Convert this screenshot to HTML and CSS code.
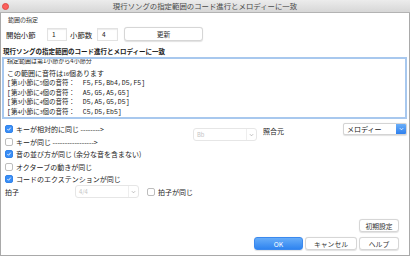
FILE: index.html
```html
<!DOCTYPE html>
<html lang="ja">
<head>
  <meta charset="UTF-8" />
  <title>現行ソングの指定範囲のコード進行とメロディーに一致</title>
  <link rel="stylesheet" href="styles.css">
</head>
<body>
  <div class="window">
    <!-- タイトルバー -->
    <div class="titlebar">
      <span class="close-dot"></span>
      <span class="title">現行ソングの指定範囲のコード進行とメロディーに一致</span>
      <span></span>
    </div>

    <!-- 範囲の指定 -->
    <div class="range-label">範囲の指定</div>
    <div class="range-row">
      <span class="lbl lbl-start">開始小節</span>
      <span class="field field-start">1</span>
      <span class="lbl lbl-count">小節数</span>
      <span class="field field-count">4</span>
      <button class="btn btn-update">更新</button>
    </div>

    <div class="heading">現行ソングの指定範囲のコード進行とメロディーに一致</div>

    <!-- 結果テキスト -->
    <div class="memo">
      <div class="memo-line first">指定範囲は第1小節から4小節分</div>
      <div class="memo-line count">この範囲に音符は<span class="num">16</span>個あります</div>
      <div class="memo-line note">[第<span class="num">1</span>小節に<span class="num">5</span>個の音符：  F5,F5,Bb4,D5,F5]</div>
      <div class="memo-line note">[第<span class="num">2</span>小節に<span class="num">4</span>個の音符：  A5,G5,A5,G5]</div>
      <div class="memo-line note">[第<span class="num">3</span>小節に<span class="num">4</span>個の音符：  D5,A5,G5,D5]</div>
      <div class="memo-line note">[第<span class="num">4</span>小節に<span class="num">3</span>個の音符：  C5,D5,Eb5]</div>
    </div>

    <!-- オプション -->
    <div class="options">
      <div class="opts-left">
        <div class="opt"><span class="check on"><svg viewBox="0 0 8 8"><path d="M1.8 4.1 3.4 5.7 6.3 2.2"/></svg></span>キーが相対的に同じ --------&gt;</div>
        <div class="opt"><span class="check"></span>キーが同じ -----------------&gt;</div>
        <div class="opt"><span class="check on"><svg viewBox="0 0 8 8"><path d="M1.8 4.1 3.4 5.7 6.3 2.2"/></svg></span>音の並び方が同じ (余分な音を含まない)</div>
        <div class="opt"><span class="check"></span>オクターブの動きが同じ</div>
        <div class="opt"><span class="check on"><svg viewBox="0 0 8 8"><path d="M1.8 4.1 3.4 5.7 6.3 2.2"/></svg></span>コードのエクステンションが同じ</div>
        <div class="opt beat-row">
          <span class="beat-lbl">拍子</span>
          <span class="combo combo-beat"><span class="combo-val">4/4</span><span class="combo-arrow"><svg viewBox="0 0 6 4"><path d="M1 1 3 3 5 1"/></svg></span></span>
          <span class="check"></span>拍子が同じ
        </div>
      </div>
      <span class="combo combo-key"><span class="combo-val">Bb</span><span class="combo-arrow"><svg viewBox="0 0 6 4"><path d="M1 1 3 3 5 1"/></svg></span></span>
      <span class="source-lbl">照合元</span>
      <span class="select">
        <span class="select-val">メロディー</span>
        <span class="select-arrow"><svg viewBox="0 0 6 4"><path d="M1 1 3 3 5 1"/></svg></span>
      </span>
    </div>

    <!-- ボタン -->
    <div class="footer">
      <button class="btn btn-wide">初期設定</button>
      <div class="btn-row">
        <button class="btn btn-ok">OK</button>
        <button class="btn btn-cancel">キャンセル</button>
        <button class="btn btn-wide">ヘルプ</button>
      </div>
    </div>
  </div>
</body>
</html>
```

FILE: styles.css
```css
/* ===== Reset ===== */
* {
  margin: 0;
  padding: 0;
  box-sizing: border-box;
  font-family: 'Noto Sans CJK JP', 'Noto Sans', sans-serif;
}
body {
  width: 410px;
  height: 256px;
  background: #fff;
  overflow: hidden;
}

/* ===== Window ===== */
.window {
  width: 410px;
  height: 256px;
  border: 1px solid #a9a9a9;
  border-top: none;
  display: flex;
  flex-direction: column;
  background: #fff;
  color: #222;
}
.titlebar {
  height: 13px;
  flex: none;
  display: grid;
  grid-template-columns: 1fr auto 1fr;
  align-items: center;
  background: linear-gradient(#ececec, #d7d7d7);
  border-bottom: 1px solid #b3b3b3;
  margin: 0 -1px;
}
.close-dot {
  width: 7px;
  height: 7px;
  border-radius: 50%;
  background: #fc605c;
  border: 0.5px solid #df4944;
  margin-left: 2px;
}
.title {
  font-size: 7.4px;
  line-height: 12px;
  color: #4a4a4a;
}

/* ===== 範囲の指定 ===== */
.range-label {
  font-size: 6px;
  line-height: 8px;
  margin: 2.5px 0 0 7px;
  color: #333;
}
.range-row {
  display: flex;
  align-items: center;
  height: 14px;
  margin-top: 3.5px;
  font-size: 7.4px;
}
.lbl-start { width: 46px; padding-left: 5px; }
.lbl-count { width: 27px; margin-left: 3px; }
.field {
  height: 13px;
  background: #fff;
  border: 1px solid #e2e2e2;
  box-shadow: inset 0 1px 1px rgba(0,0,0,0.08);
  font-size: 6.5px;
  line-height: 11px;
  padding-left: 4px;
}
.field-start { width: 20px; }
.field-count { width: 21px; }
.btn {
  height: 14px;
  background: #fff;
  border: 1px solid #d6d6d6;
  border-radius: 3px;
  box-shadow: 0 0.5px 1px rgba(0,0,0,0.12);
  font-size: 6.8px;
  color: #333;
  font-family: 'Noto Sans CJK JP', 'Noto Sans', sans-serif;
}
.btn-update { width: 79px; margin-left: 6px; }

.heading {
  font-size: 6.5px;
  line-height: 9px;
  font-weight: 700;
  margin: 5.5px 0 0 2px;
  color: #1a1a1a;
}

/* ===== 結果テキスト ===== */
.memo {
  height: 62px;
  margin: 1.5px 2px 0 1px;
  border: 2px solid #a8c8ee;
  padding-left: 3px;
  overflow: hidden;
  background: #fff;
}
.memo-line {
  white-space: pre;
  color: #222;
}
.memo-line.first {
  font-size: 6px;
  line-height: 8px;
  margin-top: -2.5px;
}
.memo-line.count {
  font-size: 7px;
  line-height: 10px;
  margin-top: 3.5px;
}
.memo-line.note {
  font-family: 'Liberation Mono', 'Noto Sans CJK JP', monospace;
  font-size: 6.5px;
  line-height: 9.6px;
}
.num {
  font-family: 'Liberation Serif', serif;
  font-size: 0.85em;
}

/* ===== オプション ===== */
.options {
  display: flex;
  align-items: flex-start;
  font-size: 7px;
}
.opts-left {
  width: 192px;
  margin-top: 3.7px;
}
.opt {
  height: 12.6px;
  display: flex;
  align-items: center;
  white-space: nowrap;
}
.check {
  width: 8px;
  height: 8px;
  flex: none;
  border: 1px solid #bdbdbd;
  border-radius: 2px;
  background: #fff;
  margin: 0 3px 0 4px;
  display: flex;
}
.check.on {
  background: #3a8ef6;
  border-color: #3384ea;
}
.check svg {
  width: 100%;
  height: 100%;
  fill: none;
  stroke: #fff;
  stroke-width: 1.2;
}
.beat-lbl {
  width: 77px;
  padding-left: 4px;
}
.beat-row .check {
  margin-left: 8px;
}
.combo {
  width: 64px;
  height: 13px;
  flex: none;
  display: flex;
  align-items: center;
  border: 1px solid #e6e6e6;
  border-radius: 3px;
  background: #fff;
  color: #c4c4c4;
  font-size: 5.8px;
}
.combo-val { flex: 1; padding-left: 3px; }
.combo-arrow {
  width: 10px;
  height: 100%;
  border-left: 1px solid #eeeeee;
  display: flex;
  align-items: center;
  justify-content: center;
}
.combo-arrow svg {
  width: 5px;
  height: 4px;
  fill: none;
  stroke: #aaa;
  stroke-width: 0.9;
}
.combo-key { margin-top: 9px; }
.source-lbl {
  margin: 7.5px 0 0 6px;
  line-height: 9px;
  font-size: 7px;
}
.select {
  width: 64px;
  height: 12px;
  margin: 4px 2px 0 auto;
  display: flex;
  background: #fff;
  border: 1px solid #d4d4d4;
  border-radius: 2px;
  box-shadow: 0 0.5px 1px rgba(0,0,0,0.12);
  overflow: hidden;
}
.select-val {
  flex: 1;
  font-size: 7px;
  line-height: 10px;
  padding-left: 3px;
}
.select-arrow {
  width: 10px;
  background: linear-gradient(#6aaef8, #2f80ee);
  display: flex;
  align-items: center;
  justify-content: center;
}
.select-arrow svg {
  width: 5px;
  height: 4px;
  fill: none;
  stroke: #fff;
  stroke-width: 1;
}

/* ===== ボタン ===== */
.footer {
  margin-top: auto;
  display: flex;
  flex-direction: column;
  align-items: flex-end;
  gap: 5px;
  padding: 0 10px 5px 0;
}
.btn-row {
  display: flex;
  gap: 2px;
}
.btn-wide { width: 40px; height: 13px; }
.btn-cancel { width: 52px; height: 13px; }
.btn-ok {
  width: 49px;
  height: 13px;
  border-color: #3b89ee;
  background: linear-gradient(#67adf9, #2f84f0);
  color: #fff;
}
```
